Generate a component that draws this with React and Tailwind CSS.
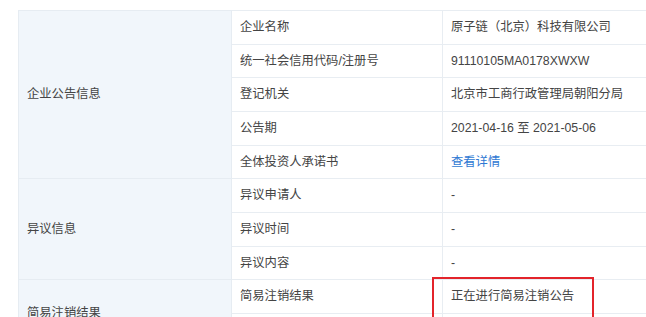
import React from 'react';

const groups = [
  {
    title: '企业公告信息',
    rows: [
      { label: '企业名称', value: '原子链（北京）科技有限公司' },
      { label: '统一社会信用代码/注册号', value: '91110105MA0178XWXW' },
      { label: '登记机关', value: '北京市工商行政管理局朝阳分局' },
      { label: '公告期', value: '2021-04-16 至 2021-05-06' },
      { label: '全体投资人承诺书', value: '查看详情', link: true },
    ],
  },
  {
    title: '异议信息',
    rows: [
      { label: '异议申请人', value: '-' },
      { label: '异议时间', value: '-' },
      { label: '异议内容', value: '-' },
    ],
  },
  {
    title: '简易注销结果',
    rows: [
      { label: '简易注销结果', value: '正在进行简易注销公告', marked: true },
      { label: '', value: '' },
    ],
  },
];

export default function App() {
  return (
    <div
      className="w-[646px] h-[317px] overflow-hidden bg-white text-[12.3px] text-[#444]"
      style={{ fontFamily: '"Liberation Sans", "Noto Sans CJK SC", sans-serif' }}
    >
      <table className="ml-[18px] mt-[10px] border-collapse table-fixed w-[660px]">
        <colgroup>
          <col className="w-[213px]" />
          <col className="w-[211px]" />
          <col />
        </colgroup>
        <tbody>
          {groups.map((g) =>
            g.rows.map((r, i) => (
              <tr key={g.title + i} className="h-[33.67px]">
                {i === 0 && (
                  <td
                    rowSpan={g.rows.length}
                    className="bg-[#f1f6fb] border border-[#e6ecf2] pl-[8px] align-middle"
                  >
                    {g.title}
                  </td>
                )}
                <td className="border border-[#e8edf2] pl-[8px] align-middle">{r.label}</td>
                <td className="border border-[#e8edf2] pl-[8px] align-middle">
                  {r.marked ? (
                    <div className="relative h-full">
                      <span>{r.value}</span>
                      <div className="absolute left-[-19px] top-[-10px] w-[162px] h-[60px] border-[2.5px] border-b-0 border-[#e3242b]" />
                    </div>
                  ) : r.link ? (
                    <span className="text-[#2f79d3]">{r.value}</span>
                  ) : (
                    r.value
                  )}
                </td>
              </tr>
            ))
          )}
        </tbody>
      </table>
    </div>
  );
}
